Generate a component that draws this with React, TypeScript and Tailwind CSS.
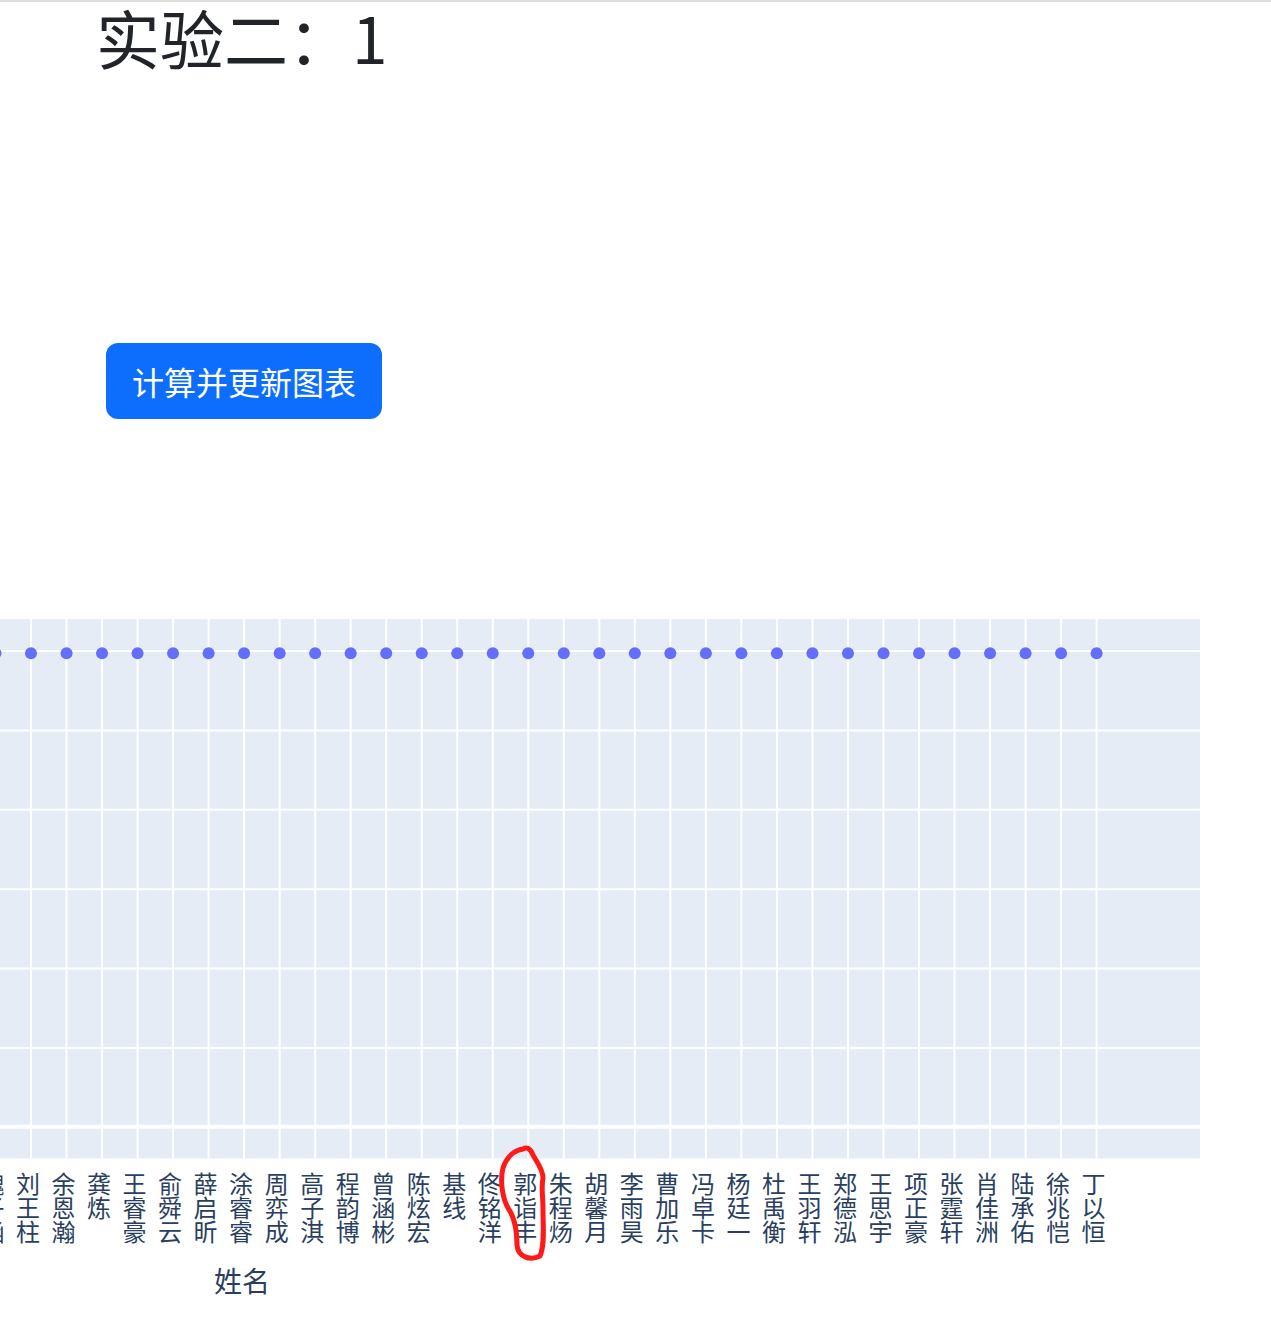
import React from "react";

const names = [
  "魏子涵",
  "刘王柱",
  "余恩瀚",
  "龚炼",
  "王睿豪",
  "俞舜云",
  "薛启昕",
  "涂睿睿",
  "周弈成",
  "高子淇",
  "程韵博",
  "曾涵彬",
  "陈炫宏",
  "基线",
  "佟铭洋",
  "郭诣丰",
  "朱程炀",
  "胡馨月",
  "李雨昊",
  "曹加乐",
  "冯卓卡",
  "杨廷一",
  "杜禹衡",
  "王羽轩",
  "郑德泓",
  "王思宇",
  "项正豪",
  "张霆轩",
  "肖佳洲",
  "陆承佑",
  "徐兆恺",
  "丁以恒",
];

const X0 = 31;
const DX = 35.52;
const xs = names.map((_, i) => X0 + (i - 1) * DX);
const ys = [651, 730.4, 809.8, 889.2, 968.6, 1048];
const CJK = "'Noto Sans CJK SC', 'Noto Sans', sans-serif";

function Chart() {
  return (
    <svg
      className="block mt-[181px]"
      width={1271}
      height={717}
      viewBox="0 600 1271 717"
    >
      <rect x={-800} y={619} width={2000} height={539.5} fill="#e5ecf6" />
      {ys.map((y) => (
        <line key={y} x1={-800} x2={1200} y1={y} y2={y} stroke="#ffffff" strokeWidth={2} />
      ))}
      {xs.map((x) => (
        <line key={x} x1={x} x2={x} y1={619} y2={1158.5} stroke="#ffffff" strokeWidth={2} />
      ))}
      <line x1={-800} x2={1200} y1={1126.7} y2={1126.7} stroke="#ffffff" strokeWidth={4} />
      <rect x={1200} y={610} width={80} height={560} fill="#ffffff" />
      {xs.map((x) => (
        <circle key={x} cx={x} cy={653.3} r={6} fill="#636efa" />
      ))}
      {names.map((n, i) => (
        <text
          key={n + i}
          fill="#2a3f5f"
          fontSize={24}
          textAnchor="middle"
          style={{ fontFamily: CJK }}
        >
          {Array.from(n).map((c, j) => (
            <tspan key={j} x={xs[i] - 3} y={1193 + j * 24}>
              {c}
            </tspan>
          ))}
        </text>
      ))}
      <text
        x={242}
        y={1292}
        fill="#2a3f5f"
        fontSize={28}
        textAnchor="middle"
        style={{ fontFamily: CJK }}
      >
        姓名
      </text>
      <path
        d="M523,1149 C515,1150 507,1156 503,1168 C500,1180 502,1197 508,1208 C515,1218 517,1230 517,1245 C518,1257 530,1261 540,1256 C545,1245 543,1225 543,1210 C543,1195 541,1188 543,1178 C543,1168 535,1160 532,1153 C530,1148 526,1147 523,1149 Z"
        fill="none"
        stroke="#ff1a1a"
        strokeWidth={5}
        strokeLinejoin="round"
      />
    </svg>
  );
}

export default function App() {
  return (
    <div className="w-[1271px] h-[1317px] overflow-hidden bg-white border-t-2 border-[#dedede] font-['Noto_Sans_CJK_SC','Noto_Sans',sans-serif]">
      <h2 className="pl-[96px] -mt-[4px] text-[64px] leading-[1.2] font-normal text-[#212529]">
        实验二：1
      </h2>
      <div className="pl-[106px] mt-[268px]">
        <button className="h-[76px] px-[26px] rounded-[12px] bg-[#0d6efd] text-white text-[32px] leading-[48px]">
          计算并更新图表
        </button>
      </div>
      <Chart />
    </div>
  );
}
